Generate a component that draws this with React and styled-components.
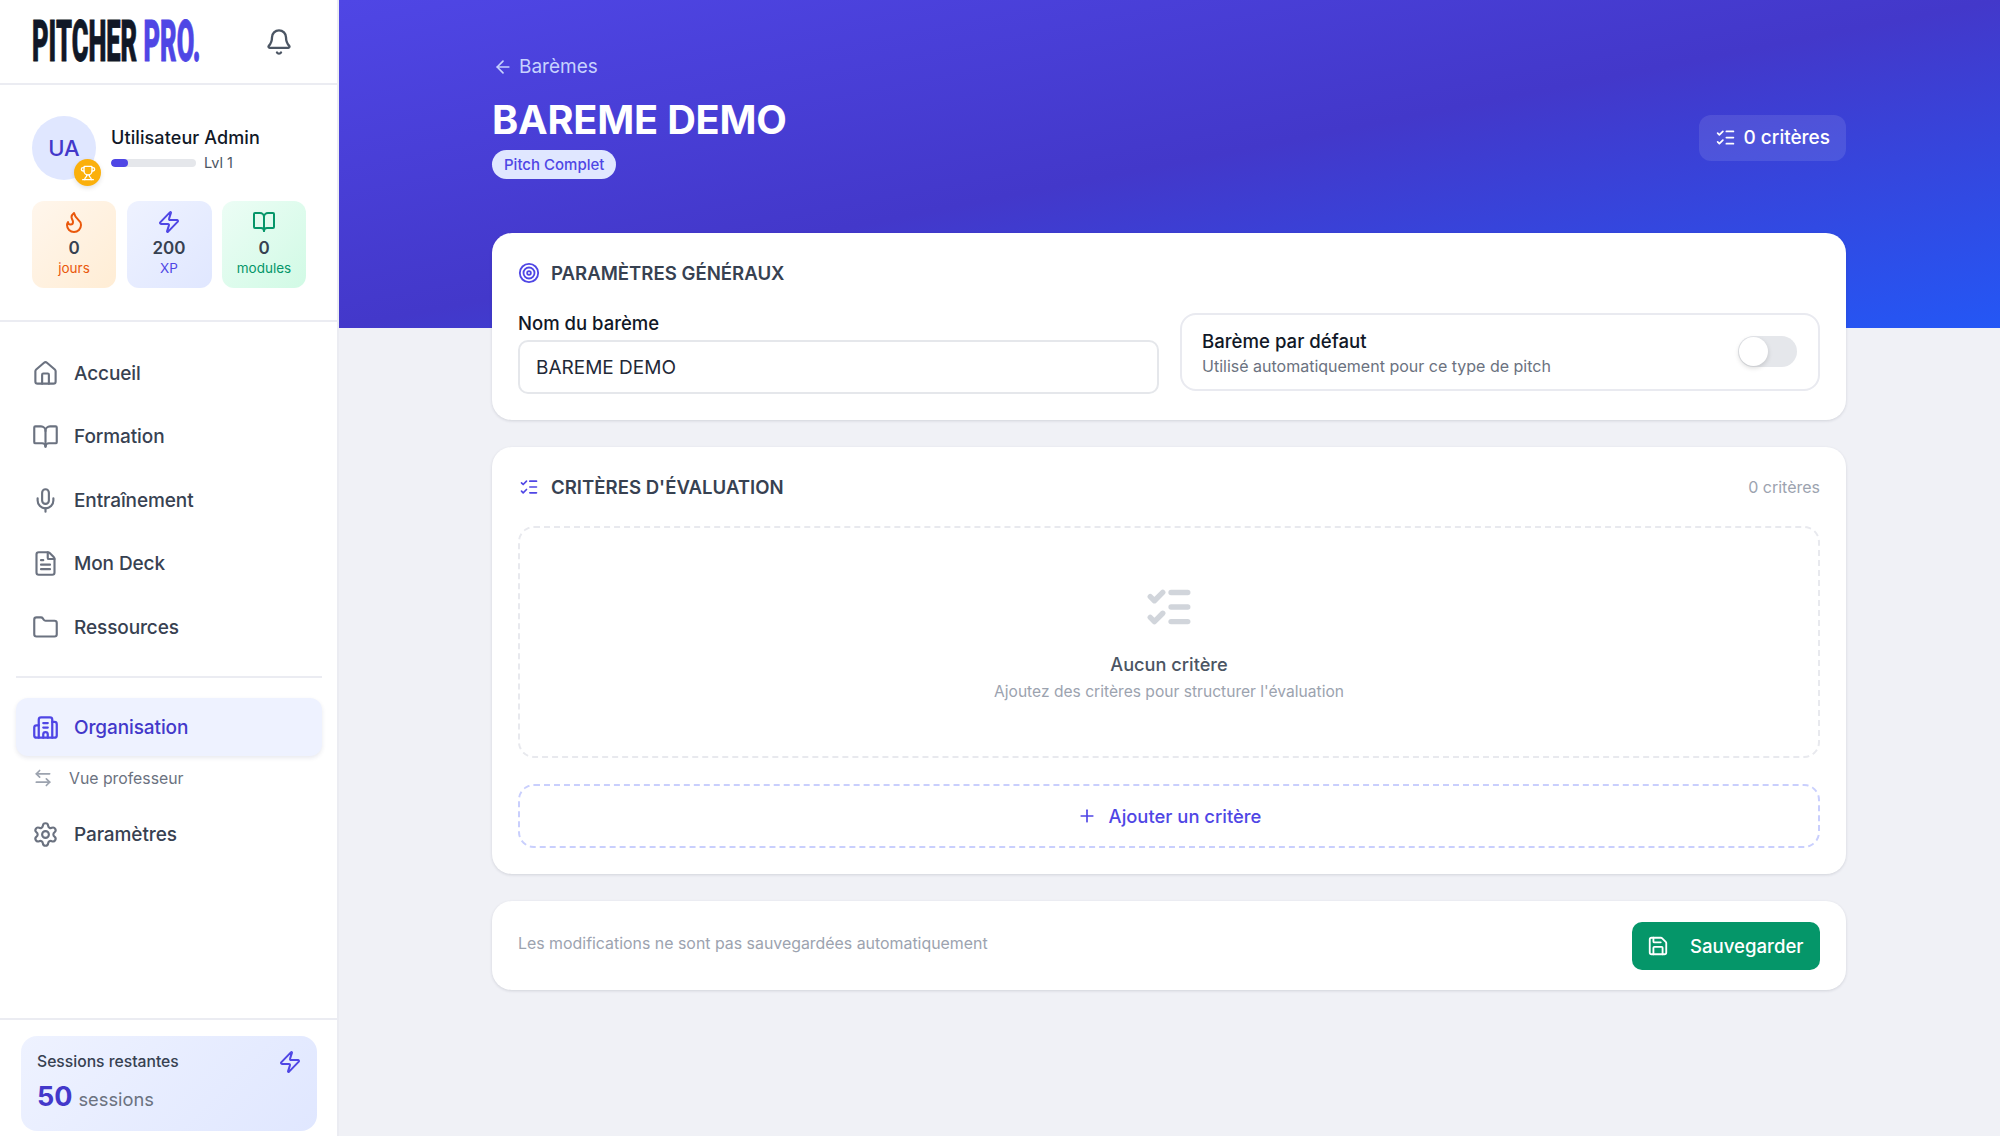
import React from "react";
import styled, { createGlobalStyle } from "styled-components";
import { Bell, Trophy, Flame, Zap, BookOpen, House, Mic, FileText, Folder, Building2, ArrowLeftRight, Settings, ArrowLeft, ListChecks, Target, Plus, Save } from "lucide-react";

const Global = createGlobalStyle`
  html, body { margin: 0; padding: 0; background: #f0f1f6; }
  body { font-family: Inter, "Noto Sans", sans-serif; color: #111827; -webkit-font-smoothing: antialiased; }
  * { box-sizing: border-box; }
`;

const Page = styled.div`display: flex; width: 2000px; height: 1136px; overflow: hidden; background: #f0f1f6;`;
const Sidebar = styled.aside`width: 339px; flex: none; height: 100%; display: flex; flex-direction: column; background: #fff; border-right: 2px solid #ebecf2;`;
const SideHead = styled.div`height: 85px; flex: none; display: flex; align-items: center; justify-content: space-between; padding: 0 44px 0 32px; border-bottom: 2px solid #ebecf2; color: #4b5563;`;
const Logo = styled.div`width: 170px; height: 42px; overflow: visible; white-space: nowrap; font-family: Roboto, "Liberation Sans", sans-serif; font-weight: 900; font-size: 57px; line-height: 42px; letter-spacing: 0; color: #111827;`;
const LogoInner = styled.span`display: inline-block; transform: scaleX(0.447); transform-origin: left center; -webkit-text-stroke: 0.8px currentColor;`;
const LogoAccent = styled.span`color: #4f46e5;`;

const Profile = styled.div`padding: 31px 32px 32px; border-bottom: 2px solid #ebecf2; flex: none;`;
const UserRow = styled.div`display: flex; align-items: center; gap: 15px; height: 64px;`;
const Avatar = styled.div`position: relative; width: 64px; height: 64px; flex: none; border-radius: 50%; background: #e0e7ff; color: #4338ca; display: flex; align-items: center; justify-content: center; font-size: 22px; font-weight: 500;`;
const Badge = styled.span`position: absolute; right: -5px; bottom: -6px; width: 27px; height: 27px; border-radius: 50%; background: #fbb00c; color: #fff; display: flex; align-items: center; justify-content: center; box-shadow: 0 2px 5px rgba(0,0,0,.12);`;
const UserInfo = styled.div`display: flex; flex-direction: column; gap: 3px; margin-top: 3px;`;
const UserName = styled.div`font-size: 18px; font-weight: 500; line-height: 24px; color: #111827; letter-spacing: .1px;`;
const LevelRow = styled.div`display: flex; align-items: center; gap: 8px; font-size: 14.5px; line-height: 20px; color: #4b5563;`;
const Track = styled.div`width: 85px; height: 8px; border-radius: 4px; background: #e5e7eb; overflow: hidden;`;
const Fill = styled.div`width: 20%; height: 100%; border-radius: 4px; background: #4f46e5;`;
const Stats = styled.div`display: grid; grid-template-columns: 84px 85px 84px; column-gap: 10.5px; margin-top: 21px;`;
const Stat = styled.div`height: 87px; border-radius: 12px; background: ${p => p.$bg}; display: flex; flex-direction: column; align-items: center; padding-top: 9px; color: ${p => p.$c};`;
const StatValue = styled.div`font-size: 17px; font-weight: 600; line-height: 22px; color: #374151; margin-top: 3px;`;
const StatLabel = styled.div`font-size: 13.5px; line-height: 19px;`;

const Nav = styled.nav`padding: 22px 15px 0 16px; display: flex; flex-direction: column; gap: 5.5px;`;
const NavItem = styled.div`height: 58px; display: flex; align-items: center; gap: 15px; padding: 0 16px; border-radius: 12px; font-size: 19px; font-weight: 500; letter-spacing: -0.1px; color: ${p => p.$active ? "#4338ca" : "#374151"}; background: ${p => p.$active ? "#eef2ff" : "transparent"}; box-shadow: ${p => p.$active ? "0 2px 4px rgba(30,41,90,.1)" : "none"}; svg { flex: none; color: ${p => p.$active ? "#4f46e5" : "#6b7280"}; margin-left: 0; }`;
const NavDivider = styled.div`height: 2px; background: #ebecf2; margin: 14px 0 15px;`;
const SubItem = styled.div`height: 44px; display: flex; align-items: center; gap: 16px; padding: 0 0 0 17px; font-size: 15.8px; color: #6b7280; margin-top: -5.5px; svg { color: #9ca3af; flex: none; }`;
const SideFoot = styled.div`margin-top: auto; border-top: 2px solid #ebecf2; padding: 16px 20px 5px 21px;`;
const SessionCard = styled.div`height: 95px; border-radius: 16px; background: linear-gradient(135deg, #eef2ff, #e0e7ff); padding: 14px 16px; display: flex; flex-direction: column; gap: 5px;`;
const SessionTop = styled.div`display: flex; justify-content: space-between; align-items: center; font-size: 15.7px; font-weight: 500; color: #374151; line-height: 24px; svg { color: #4f46e5; margin-right: -1px; }`;
const SessionRow = styled.div`display: flex; align-items: baseline; gap: 6px; font-size: 18.3px; color: #6b7280;`;
const SessionNum = styled.span`font-size: 27px; font-weight: 700; color: #4338ca; line-height: 36px;`;

const Main = styled.main`flex: 1; min-width: 0; display: flex; flex-direction: column;`;
const Hero = styled.header`height: 328px; flex: none; padding: 54px 154px 0 153px; background: linear-gradient(to bottom right, #4f46e5 0%, #4338ca 50%, #2457f5 100%); color: #fff;`;
const HeroRow = styled.div`display: flex; align-items: center; justify-content: space-between;`;
const Back = styled.div`display: flex; align-items: center; gap: 6px; font-size: 19px; line-height: 26px; color: #c7d2fe; padding-left: 1px;`;
const Title = styled.h1`margin: 13px 0 0; font-size: 39.7px; font-weight: 700; line-height: 54px; color: #fff; letter-spacing: -0.2px;`;
const Pill = styled.span`display: inline-flex; align-items: center; height: 29px; padding: 0 12px; margin-top: 3px; border-radius: 15px; background: #e0e7ff; color: #4f46e5; font-size: 15px; font-weight: 500;`;
const Chip = styled.div`display: flex; align-items: center; gap: 8px; height: 46px; padding: 0 16px; border-radius: 12px; background: rgba(255,255,255,.1); font-size: 19px; font-weight: 500; color: #fff; margin-top: 42px;`;

const Content = styled.div`margin-top: -95px; padding: 0 154px 0 153px; display: flex; flex-direction: column; gap: 27px;`;
const Card = styled.section`background: #fff; border-radius: 20px; box-shadow: 0 1px 3px rgba(30,35,60,.14); padding: ${p => p.$pad};`;
const CardHead = styled.div`display: flex; align-items: center; justify-content: space-between; height: 28px;`;
const CardTitle = styled.h2`margin: 0; display: flex; align-items: center; gap: 11px; font-size: 18.6px; font-weight: 600; color: #374151; line-height: 28px; svg { color: #4f46e5; flex: none; }`;
const CritTitle = styled(CardTitle)`gap: 12px; svg { margin-left: 1px; }`;
const Muted = styled.span`font-size: 16px; color: #9ca3af;`;
const FormRow = styled.div`display: grid; grid-template-columns: 641px 640px; column-gap: 21px; margin-top: 22px; align-items: end;`;
const Label = styled.div`font-size: 18.5px; font-weight: 500; line-height: 28px; color: #111827; margin-bottom: 2.5px;`;
const Input = styled.div`height: 54px; border: 2px solid #e5e7eb; border-radius: 10px; display: flex; align-items: center; padding: 2px 15px 0 16px; font-size: 19px; color: #1f2937;`;
const ToggleBox = styled.div`height: 78px; margin-bottom: 3px; border: 2px solid #e9eaf0; border-radius: 16px; display: flex; align-items: center; justify-content: space-between; padding: 2px 21px 0 20px;`;
const ToggleTitle = styled.div`font-size: 18.6px; font-weight: 500; line-height: 27px; color: #111827;`;
const ToggleSub = styled.div`font-size: 16px; line-height: 23px; color: #6b7280;`;
const Toggle = styled.div`width: 59px; height: 31px; border-radius: 16px; background: #e5e7eb; padding: 1px; display: flex; margin-top: -2px;`;
const Thumb = styled.span`width: 29px; height: 29px; border-radius: 50%; background: #fff; box-shadow: 0 2px 5px rgba(0,0,0,.15);`;
const Empty = styled.div`margin-top: 25px; height: 232px; border: 2px dashed #e8e9ee; border-radius: 16px; display: flex; flex-direction: column; align-items: center; padding-top: 54px; svg { color: #d1d5db; }`;
const EmptyTitle = styled.div`font-size: 18.2px; font-weight: 500; line-height: 28px; color: #4b5563; margin-top: 18px;`;
const EmptySub = styled.div`font-size: 15.6px; line-height: 24px; color: #9ca3af; margin-top: 2px;`;
const AddBtn = styled.div`margin-top: 26px; height: 64px; border: 2px dashed #c9cffd; border-radius: 16px; display: flex; align-items: center; justify-content: center; gap: 12px; color: #4f46e5; font-size: 18.4px; font-weight: 500;`;
const FootRow = styled.div`display: flex; align-items: center; justify-content: space-between;`;
const Note = styled.span`font-size: 15.9px; color: #9ca3af; margin-top: -4px;`;
const SaveBtn = styled.div`width: 188px; height: 48px; border-radius: 10px; background: #059669; color: #fff; display: flex; align-items: center; gap: 21px; padding-left: 15px; font-size: 18.6px; font-weight: 500;`;

const navTop = [[House, "Accueil"], [BookOpen, "Formation"], [Mic, "Entraînement"], [FileText, "Mon Deck"], [Folder, "Ressources"]];

export default function App() {
  return (
    <Page>
      <Global />
      <Sidebar>
        <SideHead>
          <Logo><LogoInner>PITCHER <LogoAccent>PRO.</LogoAccent></LogoInner></Logo>
          <Bell size={28} strokeWidth={2} />
        </SideHead>
        <Profile>
          <UserRow>
            <Avatar>UA<Badge><Trophy size={16} strokeWidth={2} /></Badge></Avatar>
            <UserInfo>
              <UserName>Utilisateur Admin</UserName>
              <LevelRow><Track><Fill /></Track>Lvl 1</LevelRow>
            </UserInfo>
          </UserRow>
          <Stats>
            <Stat $bg="linear-gradient(135deg,#fff6ec,#ffedd5)" $c="#ea580c"><Flame size={24} /><StatValue>0</StatValue><StatLabel>jours</StatLabel></Stat>
            <Stat $bg="linear-gradient(135deg,#eef2ff,#e0e7ff)" $c="#4f46e5"><Zap size={24} /><StatValue>200</StatValue><StatLabel>XP</StatLabel></Stat>
            <Stat $bg="linear-gradient(135deg,#ecfdf5,#d1fae5)" $c="#059669"><BookOpen size={24} /><StatValue>0</StatValue><StatLabel>modules</StatLabel></Stat>
          </Stats>
        </Profile>
        <Nav>
          {navTop.map(([I, t]) => <NavItem key={t}><I size={27} strokeWidth={1.9} />{t}</NavItem>)}
          <NavDivider />
          <NavItem $active><Building2 size={27} strokeWidth={2} />Organisation</NavItem>
          <SubItem><ArrowLeftRight size={20} strokeWidth={2} />Vue professeur</SubItem>
          <NavItem><Settings size={27} strokeWidth={1.9} />Paramètres</NavItem>
        </Nav>
        <SideFoot>
          <SessionCard>
            <SessionTop>Sessions restantes<Zap size={24} /></SessionTop>
            <SessionRow><SessionNum>50</SessionNum>sessions</SessionRow>
          </SessionCard>
        </SideFoot>
      </Sidebar>
      <Main>
        <Hero>
          <HeroRow>
            <div>
              <Back><ArrowLeft size={20} />Barèmes</Back>
              <Title>BAREME DEMO</Title>
              <Pill>Pitch Complet</Pill>
            </div>
            <Chip><ListChecks size={21} />0 critères</Chip>
          </HeroRow>
        </Hero>
        <Content>
          <Card $pad="26px 26px 26px">
            <CardHead><CardTitle><Target size={22} />PARAMÈTRES GÉNÉRAUX</CardTitle></CardHead>
            <FormRow>
              <div>
                <Label>Nom du barème</Label>
                <Input>BAREME DEMO</Input>
              </div>
              <ToggleBox>
                <div>
                  <ToggleTitle>Barème par défaut</ToggleTitle>
                  <ToggleSub>Utilisé automatiquement pour ce type de pitch</ToggleSub>
                </div>
                <Toggle><Thumb /></Toggle>
              </ToggleBox>
            </FormRow>
          </Card>
          <Card $pad="26px 26px 26px">
            <CardHead><CritTitle><ListChecks size={20} />CRITÈRES D'ÉVALUATION</CritTitle><Muted>0 critères</Muted></CardHead>
            <Empty>
              <ListChecks size={50} strokeWidth={2.6} />
              <EmptyTitle>Aucun critère</EmptyTitle>
              <EmptySub>Ajoutez des critères pour structurer l'évaluation</EmptySub>
            </Empty>
            <AddBtn><Plus size={20} />Ajouter un critère</AddBtn>
          </Card>
          <Card $pad="21px 26px 20px">
            <FootRow>
              <Note>Les modifications ne sont pas sauvegardées automatiquement</Note>
              <SaveBtn><Save size={22} />Sauvegarder</SaveBtn>
            </FootRow>
          </Card>
        </Content>
      </Main>
    </Page>
  );
}
